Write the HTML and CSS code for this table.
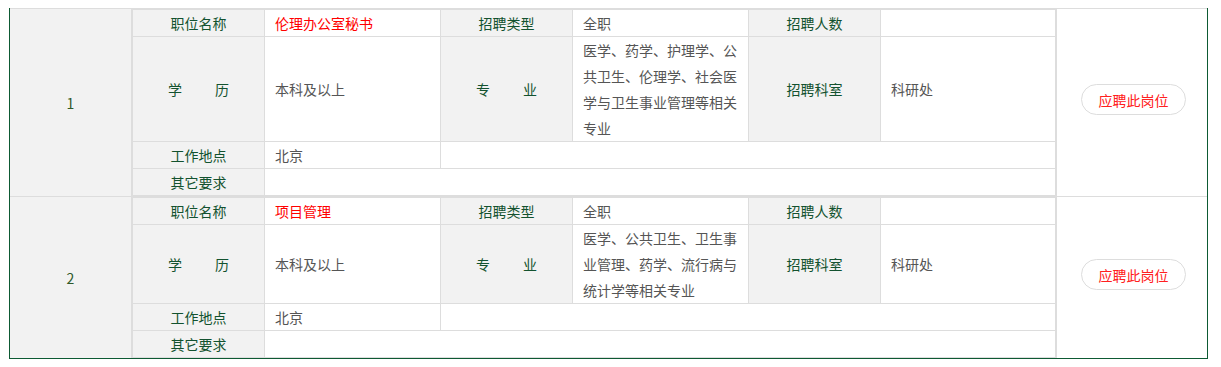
FILE: index.html
```html
<!DOCTYPE html>
<html lang="zh-CN">
<head>
<meta charset="utf-8">
<title>招聘岗位</title>
<link rel="stylesheet" href="styles.css">
</head>
<body>
<div class="jobs">
  <div class="job">
    <div class="idx">1</div>
    <div class="grid">
      <div class="lb">职位名称</div>
      <div class="val red">伦理办公室秘书</div>
      <div class="lb">招聘类型</div>
      <div class="val">全职</div>
      <div class="lb">招聘人数</div>
      <div class="val"></div>

      <div class="lb mid">学<span class="sp"></span>历</div>
      <div class="val mid">本科及以上</div>
      <div class="lb mid">专<span class="sp"></span>业</div>
      <div class="val">医学、药学、护理学、公共卫生、伦理学、社会医学与卫生事业管理等相关专业</div>
      <div class="lb mid">招聘科室</div>
      <div class="val mid">科研处</div>

      <div class="lb">工作地点</div>
      <div class="val">北京</div>
      <div class="val span4"></div>

      <div class="lb">其它要求</div>
      <div class="val span5"></div>
    </div>
    <div class="act"><button class="apply" type="button">应聘此岗位</button></div>
  </div>

  <div class="job">
    <div class="idx">2</div>
    <div class="grid">
      <div class="lb">职位名称</div>
      <div class="val red">项目管理</div>
      <div class="lb">招聘类型</div>
      <div class="val">全职</div>
      <div class="lb">招聘人数</div>
      <div class="val"></div>

      <div class="lb mid">学<span class="sp"></span>历</div>
      <div class="val mid">本科及以上</div>
      <div class="lb mid">专<span class="sp"></span>业</div>
      <div class="val">医学、公共卫生、卫生事业管理、药学、流行病与统计学等相关专业</div>
      <div class="lb mid">招聘科室</div>
      <div class="val mid">科研处</div>

      <div class="lb">工作地点</div>
      <div class="val">北京</div>
      <div class="val span4"></div>

      <div class="lb">其它要求</div>
      <div class="val span5"></div>
    </div>
    <div class="act"><button class="apply" type="button">应聘此岗位</button></div>
  </div>
</div>
</body>
</html>
```

FILE: styles.css
```css
* { box-sizing: border-box; }

html, body {
  margin: 0;
  background: #fff;
}

body {
  padding: 8px 0 0 9px;
  font-family: "Noto Sans CJK SC", "Noto Sans", sans-serif;
  font-size: 14px;
  color: #555;
}

.jobs {
  width: 1199px;
  border-left: 1px solid #0d5a33;
  border-right: 1px solid #0d5a33;
  border-bottom: 1px solid #0d5a33;
}

.job {
  display: flex;
  border-top: 1px solid #dddddd;
}

.idx {
  width: 122px;
  flex: none;
  background: #f2f2f2;
  border-right: 1px solid #dddddd;
  display: flex;
  align-items: center;
  justify-content: center;
  color: #2f5a2a;
  font-size: 14px;
}

.grid {
  width: 924px;
  flex: none;
  display: grid;
  grid-template-columns: 131px 175px 131px 175px 131px 174px;
  grid-template-rows: 26px auto 26px 26px;
  gap: 1px;
  padding: 1px;
  background: #dddddd;
}

.lb {
  background: #f2f2f2;
  color: #13522f;
  text-align: center;
  line-height: 26px;
  white-space: nowrap;
}

.val {
  background: #fff;
  color: #555;
  line-height: 26px;
  padding: 0 10px;
}

.mid {
  display: flex;
  align-items: center;
}

.lb.mid {
  justify-content: center;
}

.sp {
  display: inline-block;
  width: 33px;
}

.red { color: #ff0000; }

.span4 { grid-column: span 4; }
.span5 { grid-column: span 5; }

.act {
  flex: 1;
  border-left: 1px solid #dddddd;
  display: flex;
  align-items: center;
  justify-content: center;
  padding: 0 0 6px 3px;
}

.apply {
  width: 105px;
  height: 31px;
  border: 1px solid #dddddd;
  border-radius: 16px;
  background: #fff;
  color: #ff2020;
  font-family: "Noto Sans CJK SC", "Noto Sans", sans-serif;
  font-size: 14px;
  padding: 0;
  cursor: pointer;
}
```
